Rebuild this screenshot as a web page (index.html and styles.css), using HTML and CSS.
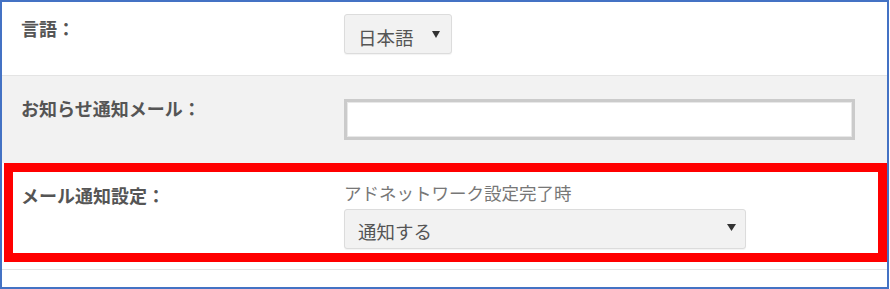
FILE: index.html
```html
<!DOCTYPE html>
<html lang="ja">
<head>
<meta charset="utf-8">
<link rel="stylesheet" href="styles.css">
</head>
<body>
<div class="frame">
  <div class="row row-lang">
    <div class="label">言語：</div>
    <div class="field">
      <div class="select select-lang">
        <span>日本語</span>
        <svg class="arrow" width="8" height="7" viewBox="0 0 8 7"><polygon points="0,0 8,0 4,7" fill="#333"/></svg>
      </div>
    </div>
  </div>
  <div class="row row-mail">
    <div class="label">お知らせ通知メール：</div>
    <div class="field">
      <div class="textbox"></div>
    </div>
  </div>
  <div class="row row-notify">
    <div class="label">メール通知設定：</div>
    <div class="field">
      <div class="sublabel">アドネットワーク設定完了時</div>
      <div class="select select-notify">
        <span>通知する</span>
        <svg class="arrow" width="9" height="7" viewBox="0 0 9 7"><polygon points="0,0 9,0 4.5,7" fill="#333"/></svg>
      </div>
    </div>
    <div class="highlight"></div>
  </div>
</div>
</body>
</html>
```

FILE: styles.css
```css
html, body {
  margin: 0;
  padding: 0;
  background: #ffffff;
}
body {
  font-family: "Noto Sans CJK JP", "Noto Sans", sans-serif;
  font-size: 17.5px;
  line-height: 24px;
  color: #555;
}
.frame {
  box-sizing: border-box;
  width: 889px;
  height: 289px;
  border: 2px solid #4472c4;
  background: #fff;
}
.row {
  display: grid;
  grid-template-columns: 342px 1fr;
  box-sizing: border-box;
  border-bottom: 1px solid #e4e4e4;
}
.label {
  padding-left: 19px;
  font-size: 18px;
  font-weight: bold;
  color: #555;
}
.row-lang {
  height: 74px;
  padding-top: 12px;
  background: #fff;
}
.row-lang .label {
  padding-top: 2px;
}
.row-mail {
  height: 87px;
  padding-top: 20px;
  background: #f2f2f2;
  border-bottom: none;
}
.textbox {
  box-sizing: border-box;
  margin-top: 3px;
  width: 511px;
  height: 41px;
  background: #fff;
  border: 3px solid #cbcbcb;
  box-shadow: inset 0 0 0 1px #e8e8e8;
}
.row-notify {
  position: relative;
  height: 107px;
  padding-top: 18px;
  background: #fff;
}
.row-notify .label {
  padding-top: 2px;
}
.sublabel {
  color: #777;
  font-weight: normal;
}
.select {
  box-sizing: border-box;
  display: flex;
  align-items: center;
  justify-content: space-between;
  padding: 0 11px 0 13px;
  background: #f2f2f2;
  border: 1px solid #dcdcdc;
  border-radius: 3px;
  box-shadow: 0 1px 1px rgba(0,0,0,0.05);
  color: #555;
  font-size: 18.5px;
}
.select span {
  padding-top: 4px;
}
.select-lang {
  width: 108px;
  height: 40px;
  align-items: flex-start;
  padding-top: 9px;
}
.select-lang span {
  padding-top: 1px;
}
.select-lang .arrow {
  margin-top: 7px;
}
.select-notify {
  width: 402px;
  height: 40px;
  margin-top: 4px;
  padding-right: 9px;
}
.select-notify .arrow {
  margin-top: -3px;
}
.arrow {
  display: block;
}
.highlight {
  position: absolute;
  left: 2px;
  top: 0;
  right: 0;
  height: 99px;
  border: 9px solid #ff0000;
  box-sizing: border-box;
  pointer-events: none;
}
```
